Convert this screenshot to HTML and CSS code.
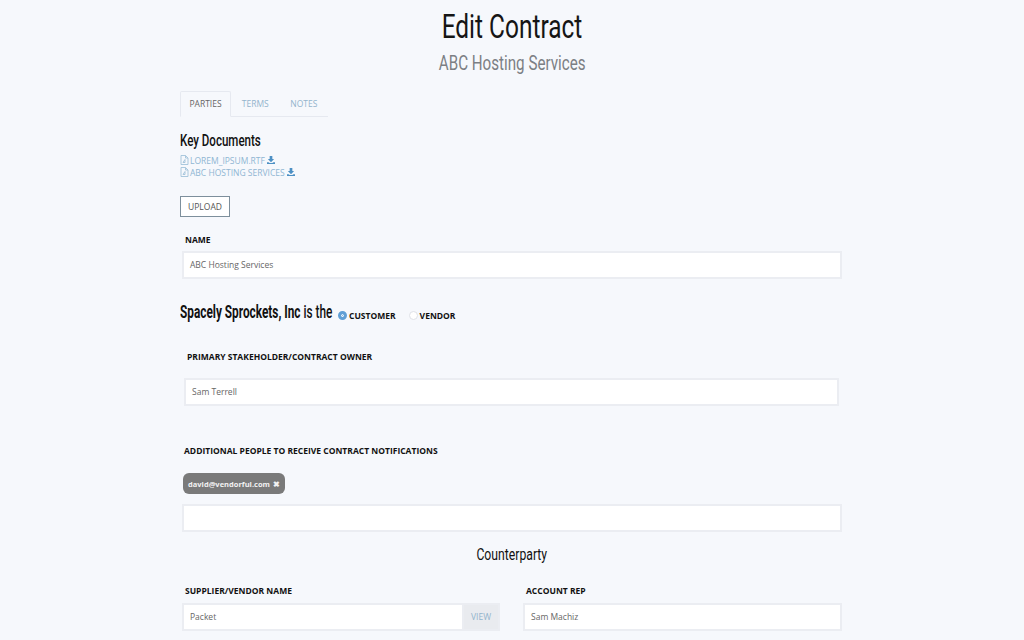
FILE: index.html
```html
<!DOCTYPE html>
<html lang="en">
<head>
<meta charset="utf-8">
<title>Edit Contract</title>
<link rel="stylesheet" href="styles.css">
</head>
<body>
<header class="page-head">
  <h1 class="title"><span class="narrow-c">Edit Contract</span></h1>
  <h2 class="subtitle"><span class="narrow-c">ABC Hosting Services</span></h2>
</header>
<main class="content">
  <nav class="tabs">
    <a class="tab active">PARTIES</a>
    <a class="tab">TERMS</a>
    <a class="tab">NOTES</a>
  </nav>
  <h3 class="docs-title"><span class="narrow-l">Key Documents</span></h3>
  <ul class="docs">
    <li class="doc">
      <svg class="ic-file" viewBox="0 0 9 10"><path d="M1 .5h4.500L8 3v6.500H1z M5.500.5V3H8 M3 7.500l2-3v3z" fill="none" stroke="#a3c3da" stroke-width=".9"/></svg>
      <span>LOREM_IPSUM.RTF</span>
      <svg class="ic-dl" viewBox="0 0 9 9"><path d="M3 0h3v3.500h2L4.500 7 1 3.500h2zM0 7h1.800l1.200 1h3l1.200-1H9v2H0z" fill="#4d90c4"/></svg>
    </li>
    <li class="doc">
      <svg class="ic-file" viewBox="0 0 9 10"><path d="M1 .5h4.500L8 3v6.500H1z M5.500.5V3H8 M3 7.500l2-3v3z" fill="none" stroke="#a3c3da" stroke-width=".9"/></svg>
      <span>ABC HOSTING SERVICES</span>
      <svg class="ic-dl" viewBox="0 0 9 9"><path d="M3 0h3v3.500h2L4.500 7 1 3.500h2zM0 7h1.800l1.200 1h3l1.200-1H9v2H0z" fill="#4d90c4"/></svg>
    </li>
  </ul>
  <button class="upload" type="button">UPLOAD</button>

  <section class="field field-name">
    <label class="label">NAME</label>
    <div class="input">ABC Hosting Services</div>
  </section>

  <div class="role-row">
    <span class="role-text"><span class="narrow-role"><span class="role-strong">Spacely Sprockets, Inc</span> is the</span></span>
    <span class="radio checked"></span><span class="radio-label">CUSTOMER</span>
    <span class="radio unchecked"></span><span class="radio-label">VENDOR</span>
  </div>

  <section class="field field-owner">
    <label class="label">PRIMARY STAKEHOLDER/CONTRACT OWNER</label>
    <div class="input">Sam Terrell</div>
  </section>

  <section class="field field-additional">
    <label class="label">ADDITIONAL PEOPLE TO RECEIVE CONTRACT NOTIFICATIONS</label>
    <div class="chip">david@vendorful.com <span class="chip-x">✖</span></div>
    <div class="input"></div>
  </section>

  <h3 class="counterparty"><span class="narrow-c">Counterparty</span></h3>

  <div class="two-col">
    <section class="col col-left">
      <label class="label">SUPPLIER/VENDOR NAME</label>
      <div class="input-group">
        <div class="input grow">Packet</div>
        <div class="addon">VIEW</div>
      </div>
    </section>
    <section class="col col-right">
      <label class="label">ACCOUNT REP</label>
      <div class="input">Sam Machiz</div>
    </section>
  </div>
</main>
</body>
</html>
```
FILE: styles.css
```css
* { box-sizing: border-box; }
html, body { margin: 0; height: 640px; overflow: hidden; }
body {
  background: #f6f8fc;
  font-family: "Open Sans", "Liberation Sans", sans-serif;
  color: #111;
}
/* The reference's headings use a condensed face; these squeeze an installed one. */
.narrow-c, .narrow-l, .narrow-role {
  display: inline-block;
  white-space: nowrap;
  transform: scaleX(.74);
}
.narrow-c { transform-origin: center; }
.narrow-l { transform: scaleX(.7); transform-origin: left center; }
.narrow-role { transform: scaleX(.657); transform-origin: left center; }
.page-head { text-align: center; padding-top: 7px; }
.title {
  margin: 0;
  font: 400 33px/40px Roboto, "Liberation Sans", sans-serif;
  color: #151515;
}
.subtitle {
  margin: 2px 0 0;
  font: 400 20.500px/28px Roboto, "Liberation Sans", sans-serif;
  color: #7c7f84;
}
.content { width: 664px; margin: 14px 0 0 180px; }
.tabs {
  display: flex;
  width: 148px;
  height: 26px;
  border-bottom: 1px solid #e6e9f0;
}
.tab {
  font-size: 8.500px;
  line-height: 25px;
  padding: 0 10px;
  color: #93b4cc;
  height: 26px;
  width: 49px;
  text-align: center;
  white-space: nowrap;
}
.tab.active {
  width: 52px;
  color: #666;
  background: #f6f8fc;
  border: 1px solid #e6e9f0;
  border-bottom-color: #f6f8fc;
  border-radius: 2px 2px 0 0;
  line-height: 24px;
  padding: 0;
}
.docs-title {
  margin: 14px 0 0;
  font: 500 16.500px/20px Roboto, "Liberation Sans", sans-serif;
  color: #111;
}
.docs { list-style: none; margin: 3px 0 0; padding: 0; }
.doc {
  display: flex;
  align-items: center;
  gap: 1px;
  height: 12px;
  font-size: 8.500px;
  color: #8fb6d3;
}
.ic-file { width: 9px; height: 10px; }
.ic-dl { width: 8px; height: 8px; margin-left: 1px; }
.upload {
  display: block;
  margin-top: 18px;
  width: 50px;
  height: 21px;
  padding: 0;
  background: #fff;
  border: 1px solid #7d8f9c;
  font: 400 8.500px "Open Sans", sans-serif;
  color: #555;
}
.label {
  display: block;
  font-size: 8.500px;
  font-weight: 700;
  line-height: 12px;
  color: #111;
  white-space: nowrap;
}
.input {
  height: 28px;
  background: #fff;
  border: 2px solid #ebedf2;
  font-size: 8.500px;
  line-height: 24px;
  padding-left: 6px;
  color: #666;
}
.field-name { margin: 17px 0 0 2px; width: 660px; }
.field-name .label { padding-left: 3px; margin-bottom: 5px; }
.role-row {
  display: flex;
  align-items: center;
  height: 24px;
  margin-top: 21px;
}
.role-text {
  flex: none;
  font: 500 18px/24px Roboto, "Liberation Sans", sans-serif;
  color: #111;
  width: 158px;
}
.role-strong { font-weight: 700; }
.radio {
  width: 9px;
  height: 9px;
  border-radius: 50%;
  margin: 6px 2px 0 0;
  flex: none;
}
.radio.checked {
  background: #5f9fd6;
  border: 3px solid #5f9fd6;
  box-shadow: inset 0 0 0 1px #fff;
}
.radio.unchecked {
  background: #fff;
  border: 1px solid #dfe2e8;
  margin-left: 13px;
}
.radio-label { font-size: 8.500px; font-weight: 700; color: #111; margin-top: 6px; }
.field-owner { margin: 27px 0 0 4px; width: 655px; }
.field-owner .label { padding-left: 3px; margin-bottom: 15px; }
.field-additional { margin: 39px 0 0 2px; width: 660px; }
.field-additional .label { padding-left: 2px; margin-bottom: 16px; }
.chip {
  display: flex;
  align-items: center;
  justify-content: center;
  gap: 3px;
  width: 102px;
  height: 21px;
  margin: 0 0 10px 1px;
  background: #7a7a7a;
  border-radius: 6px;
  color: #f2f2f2;
  font-size: 7.500px;
  font-weight: 700;
}
.chip-x { font-size: 8px; }
.counterparty {
  width: 664px;
  margin: 13px 0 0;
  text-align: center;
  font: 400 16.500px/20px Roboto, "Liberation Sans", sans-serif;
  color: #111;
}
.two-col {
  display: flex;
  gap: 23px;
  margin: 20px 0 0 2px;
  width: 660px;
}
.col-left { width: 318px; flex: none; }
.col-right { flex: 1; }
.col .label { padding-left: 3px; margin-bottom: 6px; }
.input-group { display: flex; }
.grow { flex: 1; }
.addon {
  width: 36px;
  height: 28px;
  background: #e9ebef;
  border: 2px solid #ebedf2;
  border-left: 0;
  color: #93b4cc;
  font-size: 8.500px;
  line-height: 24px;
  text-align: center;
}
```
